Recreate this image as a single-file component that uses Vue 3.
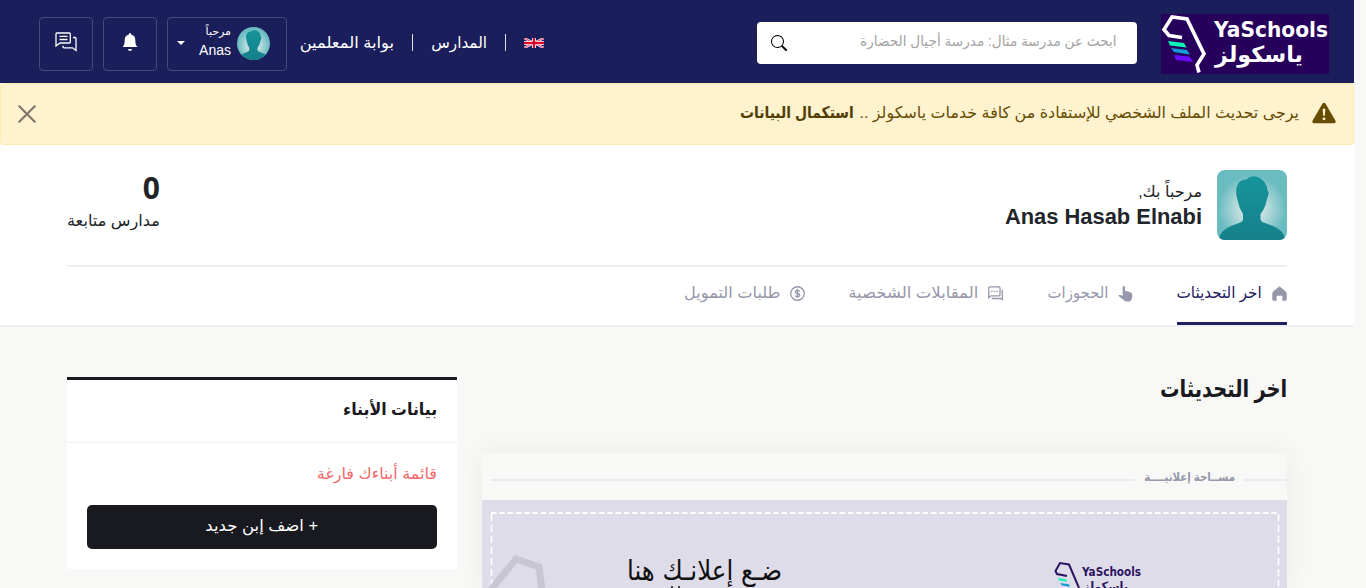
<script setup>
const tabs = [
  { label: 'اخر التحديثات', icon: 'home', w: 110, active: true },
  { label: 'الحجوزات', icon: 'hand', w: 86 },
  { label: 'المقابلات الشخصية', icon: 'chat', w: 154 },
  { label: 'طلبات التمويل', icon: 'coin', w: 122 },
]
</script>

<template>
  <div class="page" dir="rtl">
    <header class="topbar">
      <svg class="logo" viewBox="0 0 168 60" direction="ltr">
        <rect width="168" height="60" fill="#26005b" />
        <path d="M21 23.500L8 21.500L3 15.500L11 3L26 5L43 40L36 51L38 58.500" fill="none" stroke="#fff" stroke-width="3.600" />
        <path d="M7 27l16 2 2.500 4.500L9 31.500z" fill="#0df5b5" />
        <path d="M10 34l16 2 3 4.500L13 38z" fill="#159ddb" />
        <path d="M13 41l15 1.500 4.500 5.500L15 46z" fill="#6a0dff" />
        <text x="53" y="23" textLength="114" lengthAdjust="spacingAndGlyphs" class="lg">YaSchools</text>
        <text x="54" y="47.500" textLength="88" lengthAdjust="spacingAndGlyphs" class="lg">ياسكولز</text>
      </svg>
      <div class="search">
        <span class="ph">ابحث عن مدرسة مثال: مدرسة أجيال الحضارة</span>
        <svg width="16" height="16" viewBox="0 0 16 16"><path fill="#000" d="M11.742 10.344a6.500 6.500 0 1 0-1.397 1.398h-.001c.03.040.062.078.098.115l3.850 3.850a1 1 0 0 0 1.415-1.414l-3.850-3.850a1.007 1.007 0 0 0-.115-.1zM12 6.500a5.500 5.500 0 1 1-11 0 5.500 5.500 0 0 1 11 0z" /></svg>
      </div>
      <nav class="nav">
        <svg class="flag" width="20" height="10" viewBox="0 0 60 30">
          <rect width="60" height="30" fill="#012169" />
          <path d="M0 0L60 30M60 0L0 30" stroke="#fff" stroke-width="7" />
          <path d="M0 0L60 30M60 0L0 30" stroke="#e4002b" stroke-width="2.500" />
          <path d="M30 0V30M0 15H60" stroke="#fff" stroke-width="12" />
          <path d="M30 0V30M0 15H60" stroke="#e4002b" stroke-width="7" />
        </svg>
        <span class="bar"></span>
        <span class="n1">المدارس</span>
        <span class="bar"></span>
        <span class="n2">بوابة المعلمين</span>
      </nav>
      <div class="box user">
        <svg class="face" viewBox="0 0 70 70">
          <use href="#person" />
        </svg>
        <div class="hello"><small>مرحباً</small><b>Anas</b></div>
        <span class="caret"></span>
      </div>
      <div class="box">
        <svg width="16" height="18" viewBox="0 0 16 18"><path fill="#fff" d="M8 0a1 1 0 0 0-1 1v.5C4.200 2 2.700 4 2.700 7c0 4-.9 6-2.200 7h15c-1.300-1-2.200-3-2.200-7 0-3-1.500-5-4.300-5.500V1a1 1 0 0 0-1-1zM6 16h4a2 2 0 0 1-4 0z" /></svg>
      </div>
      <div class="box">
        <svg width="22" height="20" viewBox="0 0 22 20" fill="none" stroke="#fff" stroke-width="1.300"><path d="M1.700 1h12.600q1 0 1 1v8q0 1-1 1H5l-4 3V2q0-1 .7-1zM4.500 4.300h8M4.500 7.500h8M18 5.500h2q1 0 1 1V18.500l-3.500-2.700H9q-1 0-1-1v-1" /></svg>
      </div>
    </header>

    <div class="alert">
      <svg class="warn" width="24" height="22" viewBox="0 0 16 15"><path fill="#664d03" d="M8.980 1.070a1.130 1.130 0 0 0-1.960 0L.165 12.770c-.457.780.091 1.770.98 1.770h13.713c.889 0 1.438-.990.980-1.770zM8 4.500c.535 0 .954.460.9.990l-.35 3.510a.55.550 0 0 1-1.100 0L7.100 5.500A.905.905 0 0 1 8 4.500zm0 6a1 1 0 1 1 0 2 1 1 0 0 1 0-2z" /></svg>
      <p><span class="a1">يرجى تحديث الملف الشخصي للإستفادة من كافة خدمات ياسكولز ..</span><b class="a2">استكمال البيانات</b></p>
      <svg class="close" width="18" height="18" viewBox="0 0 18 18"><path d="M1.300 1.300L16.700 16.700M16.700 1.300L1.300 16.700" stroke="#7f786a" stroke-width="2.200" stroke-linecap="round" /></svg>
    </div>

    <section class="profile">
      <div class="who">
        <svg class="avatar" viewBox="0 0 70 70">
          <defs>
            <radialGradient id="glow" cx=".5" cy=".55" r=".6"><stop offset=".3" stop-color="#c5dfe0" /><stop offset=".8" stop-color="#6abcc1" /></radialGradient>
            <linearGradient id="body" x1="0" y1="0" x2="0" y2="1"><stop offset="0" stop-color="#17949c" /><stop offset="1" stop-color="#15808a" /></linearGradient>
            <g id="person">
              <rect width="70" height="70" fill="url(#glow)" />
              <path fill="url(#body)" d="M2 68Q4 60 14 56L22 53Q27 51 26 48V44Q22 38 20.500 30C17 18 21 9 29 9.500Q35 4 42 7.500Q50 12 50.500 20.500Q53 22 50 29Q48 39 43.500 44V49Q44 52 48 53L56 56Q66 60 68 68V70H2z" />
            </g>
          </defs>
          <use href="#person" />
        </svg>
        <div class="names"><span class="welcome">مرحباً بك,</span><strong>Anas Hasab Elnabi</strong></div>
        <div class="stat"><strong>0</strong><span>مدارس متابعة</span></div>
      </div>
      <div class="tabs">
        <a v-for="t in tabs" :key="t.icon" :class="['tab', t.icon, { active: t.active }]" :style="{ width: t.w + 'px' }">
          <svg width="15" height="15" viewBox="0 0 16 16">
            <path v-if="t.icon === 'home'" fill="#9598aa" d="M8 .3L1.300 5.800Q.3 6.600 .3 8v6.500q0 1.200 1.200 1.200H5V10.500h6v5.200h3.500q1.200 0 1.200-1.200V8q0-1.400-1-2.200z" />
            <path v-else-if="t.icon === 'hand'" fill="#9598aa" d="M6 0q1.500 0 1.500 1.500V5l1.300.2 1.200.6 1.500.1 1 .8 1.500.2q1.300.8 1.300 3.600 0 4-2.500 6H8L1 11q-1-.8 0-1.300l1.500-.1L5 10.500v-9Q5 0 6 0z" />
            <g v-else-if="t.icon === 'chat'" fill="none" stroke="#9598aa" stroke-width="1.400"><path d="M.8 12.500V2.300Q.8 1 2 1h9.500q1.300 0 1.300 1.300V9q0 1.500-1.300 1.500H3zM15.200 4v10.500l-2-1.200H4" /><path d="M3.200 5.700h7.600" stroke-dasharray="1.600 1.300" /></g>
            <g v-else fill="none" stroke="#9598aa" stroke-width="1.400"><circle cx="8" cy="8" r="7.200" /><path d="M10.300 5.800Q9.800 4.700 8 4.700q-2.200 0-2.200 1.600T8 8t2.300 1.700T8 11.300q-2 0-2.400-1.200M8 3.300v9.400" /></g>
          </svg>
          <span>{{ t.label }}</span>
        </a>
      </div>
    </section>

    <main class="content">
      <section class="updates">
        <h2><span>اخر التحديثات</span></h2>
        <div class="ad">
          <div class="adhead"><i class="l1"></i><span>مســاحة إعلانيــــة</span><i class="l2"></i></div>
          <svg class="banner" width="805" height="88" viewBox="0 0 805 88" direction="ltr">
            <rect width="805" height="88" fill="#dfdcea" />
            <path d="M9 13H797" stroke="#fff" stroke-width="2" stroke-dasharray="5.500 2.800" />
            <path d="M9.500 14V88M796.500 14V88" stroke="#fff" stroke-width="1.600" stroke-dasharray="7 4" />
            <path d="M8 91L34 59L57 67L60 91" fill="none" stroke="#c9c5d2" stroke-width="7" />
            <text x="145" y="80" textLength="155" lengthAdjust="spacingAndGlyphs" class="slogan">ضـع إعلانـك هنا</text>
            <path d="M190 86v2M197 86v2" stroke="#111" stroke-width="1.500" />
            <path d="M585 76L575 74L573.500 71L578 63L587 64.500L597 88" fill="none" stroke="#2c1460" stroke-width="2" />
            <path d="M576 78l8 1.300 1 2.500-8-1.300z" fill="#0df5b5" /><path d="M578 83l9 1.300 1 2.500-8-1.300z" fill="#159ddb" />
            <text x="600" y="76" textLength="59" lengthAdjust="spacingAndGlyphs" class="mini">YaSchools</text>
            <text x="601" y="91" textLength="45" lengthAdjust="spacingAndGlyphs" class="mini">ياسكولز</text>
          </svg>
        </div>
      </section>
      <aside class="kids">
        <h3><span>بيانات الأبناء</span></h3>
        <p><span>قائمة أبناءك فارغة</span></p>
        <button><span>+ اضف إبن جديد</span></button>
      </aside>
    </main>
  </div>
</template>

<style>
html, body { margin: 0; background: #f8f8f6; overflow: hidden; }
</style>
<style scoped>
.page { width: 1354px; height: 588px; overflow: hidden; background: #f8f8f6; font-family: "Liberation Sans", "DejaVu Sans", sans-serif; font-size: 16px; color: #212529; }
.page * { box-sizing: border-box; }
span, small, strong, b, i { white-space: nowrap; font-style: normal; }
.topbar { height: 83px; background: #1a1e5a; display: flex; align-items: center; padding: 5px 25px 0 39px; }
.logo { width: 168px; height: 60px; flex: none; }
.lg { font: bold 22px "DejaVu Sans", sans-serif; fill: #fff; }
.search { width: 380px; height: 42px; margin: 0 24px 2px auto; background: #fff; border-radius: 4px; display: flex; justify-content: space-between; align-items: center; padding: 0 20px 0 14px; }
.ph { color: #a3a3a3; font-size: 14px; transform: scaleX(.973); transform-origin: right; padding-bottom: 4px; }
.nav { display: flex; align-items: center; color: #fff; margin-left: 13px; padding-bottom: 4px; }
.flag { margin-top: 2px; }
.n1, .n2 { display: block; transform-origin: right; }
.n1 { width: 56px; transform: scaleX(.95); }
.n2 { width: 94px; transform: scaleX(1.02); }
.bar { width: 1px; height: 17px; background: #e0e0ea; margin: 0 18px; }
.box { width: 54px; height: 54px; border: 1px solid #464a7b; border-radius: 4px; margin-right: 10px; padding-bottom: 4px; display: flex; align-items: center; justify-content: center; flex: none; }
.user { width: 120px; margin-right: 0; justify-content: flex-start; padding: 0 16px 2px 0; }
.face { width: 33px; height: 33px; border-radius: 50%; }
.hello { width: 32px; display: flex; flex-direction: column; color: #fff; margin-right: 6px; }
.hello small { font-size: 11px; line-height: 15px; position: relative; top: -1px; }
.hello b { font-weight: 400; font-size: 14px; line-height: 21px; }
.caret { border: 4px solid transparent; border-top-color: #fff; border-bottom: 0; margin-right: 14px; }
.alert { height: 62px; background: #fff2cf; border: 1px solid #ffe9ad; border-radius: 4px; display: flex; align-items: center; color: #664d03; padding: 0 17px; }
.warn { margin-bottom: 2px; }
.close { margin: 0 -1px 1px 0; }
.alert p { margin: 0 13px 4px auto; display: flex; gap: 5px; }
.alert b { color: #523e02; transform: scaleX(.87); transform-origin: right; margin-right: -2px; }
.a1 { width: 442px; transform: scaleX(.996); transform-origin: right; }
.profile { height: 182px; background: #fff; border-bottom: 2px solid #efefef; padding: 0 67px; }
.who { height: 122px; border-bottom: 2px solid #efefef; display: flex; align-items: flex-start; padding-top: 25px; }
.avatar { width: 70px; height: 70px; border-radius: 8px; }
.names { display: flex; flex-direction: column; margin-right: 15px; padding-top: 10px; }
.names span { line-height: 24px; }
.names strong { font-size: 21.900px; line-height: 26px; }
.stat { margin-right: auto; display: flex; flex-direction: column; width: 93px; }
.stat strong { font: bold 30px/36px "Noto Sans", sans-serif; margin-bottom: 2px; }
.stat span { line-height: 26px; transform: scaleX(1.01); transform-origin: right; }
.tabs { display: flex; gap: 44px; height: 58px; }
.tab { display: flex; color: #9598aa; height: 58px; padding-top: 14px; gap: 10px; }
.tab svg { margin-top: 5px; flex: none; overflow: visible; }
.tab span { line-height: 24px; transform-origin: right; }
.home span { transform: scaleX(.95); }
.hand span { transform: scaleX(.93); }
.chat span { transform: scaleX(1.03); }
.coin span { transform: scaleX(1.01); }
.active { color: #1e2060; border-bottom: 3px solid #1e2060; }
.content { display: flex; justify-content: space-between; padding: 50px 67px 0; }
.updates { width: 805px; }
h2 { margin: 0; font-size: 24px; line-height: 24px; height: 76px; color: #191a21; }
h2 span { display: inline-block; transform: scaleX(.81); transform-origin: right; }
.ad { box-shadow: 0 0 30px rgba(0, 0, 0, .06); border-radius: 4px; }
.adhead { height: 47px; display: flex; align-items: center; padding-top: 7px; gap: 9px; color: #9598aa; font-size: 12px; font-weight: 700; }
.adhead span { width: 91px; transform: scaleX(.855); transform-origin: right; padding-bottom: 6px; }
.adhead i { height: 2px; background: #ebeaf1; }
.l1 { width: 43px; }
.l2 { flex: 1; margin-left: 9px; }
.banner { display: block; }
.slogan { font: 28px "DejaVu Sans", sans-serif; fill: #111; }
.mini { font: bold 13px "DejaVu Sans", sans-serif; fill: #2c1460; }
.kids { width: 390px; height: 192px; background: #fff; border-top: 3px solid #191a21; }
h3 { margin: 0; height: 63px; border-bottom: 1px solid #efefef; padding: 0 20px; font-size: 17px; line-height: 59px; color: #191a21; }
h3 span { display: inline-block; transform: scaleX(.93); transform-origin: right; }
.kids p { margin: 0; height: 62px; padding: 0 20px; line-height: 62px; color: #f36a6a; }
.kids button { display: block; width: 350px; height: 44px; margin: 0 20px; border: 0; border-radius: 5px; background: #191a20; color: #fff; font: inherit; padding: 0 0 4px; }
.kids button span { display: inline-block; transform: scaleX(1.03); }
</style>
